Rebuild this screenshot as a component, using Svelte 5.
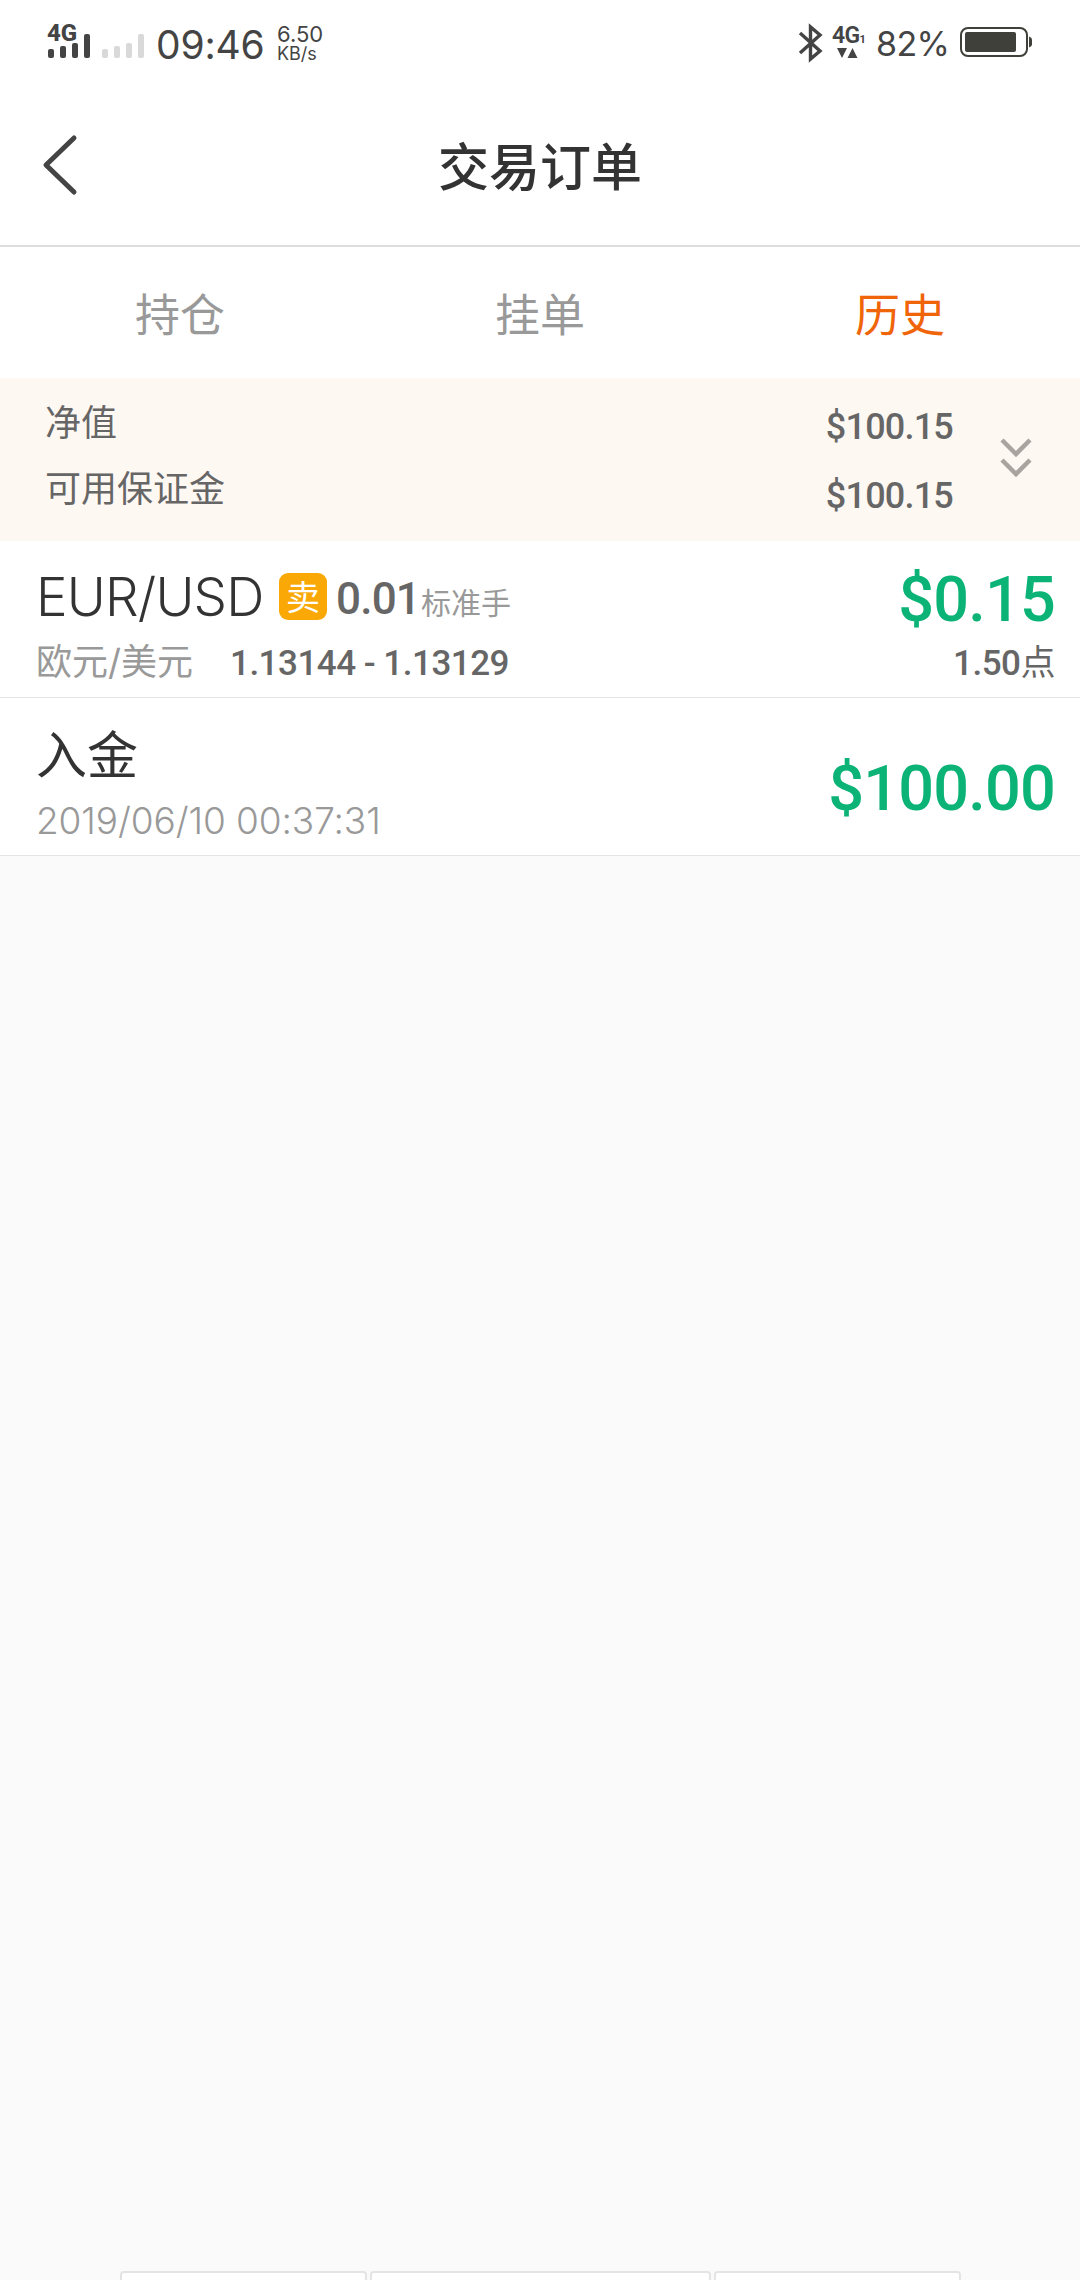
<script lang="ts">
	const tabs = ["持仓", "挂单", "历史"];
	let active = $state("历史");

	const account = [
		{ label: "净值", value: "$100.15" },
		{ label: "可用保证金", value: "$100.15" },
	];

	// signal bar heights, left to right
	const bars = [9, 12, 15, 24];
</script>

<div class="page">
	<div class="status">
		<svg class="signal" width="96" height="40" viewBox="0 0 96 40">
			<text x="-1" y="18.5" class="net">4G</text>
			{#each bars as h, i}
				<rect x={i * 12} y={36 - h} width="6" height={h} rx="2" fill="#444" />
				<rect x={54 + i * 12} y={36 - h} width="6" height={h} rx="2" fill="#d9d9d9" />
			{/each}
		</svg>
		<span class="time">09:46</span>
		<div class="speed">
			<span class="rate">6.50</span>
			<span class="unit">KB/s</span>
		</div>
		<div class="spacer"></div>
		<svg class="bluetooth" width="24" height="36" viewBox="0 0 24 36">
			<path d="M1 8 L21 26 L11.5 34 V2 L21 10 L1 28" fill="none" stroke="#444" stroke-width="3.400" />
		</svg>
		<svg class="data" width="36" height="36" viewBox="0 0 36 36">
			<text x="0" y="18" class="net thin">4G</text>
			<text x="27.500" y="18" class="sim">1</text>
			<path d="M5 23 h10 l-5 10z M15.500 33 h10 l-5 -10z" fill="#444" />
		</svg>
		<span class="percent">82%</span>
		<svg class="battery" width="73" height="30" viewBox="0 0 73 30">
			<rect x="1" y="1" width="66" height="28" rx="7" fill="none" stroke="#40403a" stroke-width="2" />
			<rect x="5" y="5" width="51" height="20" rx="2" fill="#40403a" />
			<path d="M69 9.500 q3 1 3 3 v5 q0 2 -3 3z" fill="#40403a" />
		</svg>
	</div>

	<header>
		<button class="back" aria-label="返回">
			<svg width="36" height="62" viewBox="0 0 36 62">
				<path d="M32 4 L4 31 L32 58" fill="none" stroke="#444" stroke-width="5" stroke-linecap="round" stroke-linejoin="round" />
			</svg>
		</button>
		<h1>交易订单</h1>
	</header>

	<nav>
		{#each tabs as tab}
			<button class:active={tab === active} onclick={() => (active = tab)}>{tab}</button>
		{/each}
	</nav>

	<section class="account">
		<div class="labels">
			{#each account as row}
				<span>{row.label}</span>
			{/each}
		</div>
		<div class="values">
			{#each account as row}
				<span>{row.value}</span>
			{/each}
		</div>
		<svg width="34" height="42" viewBox="0 0 34 42">
			<path d="M3 3 L17 17 L31 3 M3 23 L17 37 L31 23" fill="none" stroke="#aaa4a1" stroke-width="4.500" />
		</svg>
	</section>

	<section class="item trade">
		<div class="left">
			<div class="top">
				<span class="symbol">EUR/USD</span>
				<span class="badge">卖</span>
				<span class="lots">0.01</span>
				<span class="lots-unit">标准手</span>
			</div>
			<div class="bottom">
				<span class="name">欧元/美元</span>
				<span class="prices">1.13144 - 1.13129</span>
			</div>
		</div>
		<div class="right">
			<span class="profit">$0.15</span>
			<span class="points">1.50<i>点</i></span>
		</div>
	</section>

	<section class="item deposit">
		<div class="left">
			<span class="kind">入金</span>
			<span class="date">2019/06/10 00:37:31</span>
		</div>
		<div class="right">
			<span class="profit">$100.00</span>
		</div>
	</section>

	<div class="filters">
		<span></span>
		<span class="wide"></span>
		<span></span>
	</div>
</div>

<style>
	:global(body) {
		background: #fafafa;
	}

	.page {
		display: flex;
		flex-direction: column;
		width: 1080px;
		height: 2280px;
		overflow: hidden;
		background: #fafafa;
		color: #333;
		font-family: Inter, "Noto Sans CJK SC", sans-serif;
	}

	button {
		padding: 0;
		border: 0;
		background: none;
		font: inherit;
	}

	svg {
		display: block;
		flex: none;
		overflow: visible;
	}

	.status {
		display: flex;
		align-items: flex-start;
		box-sizing: border-box;
		height: 88px;
		padding: 22px 47px 0 48px;
		background: #fff;
		color: #444;
		white-space: nowrap;
	}

	.net {
		font: 800 24px Roboto, sans-serif;
		fill: #444;
	}

	.thin {
		font-weight: 600;
		font-size: 23px;
		letter-spacing: -0.6px;
	}

	.sim {
		font: 700 11px Roboto, sans-serif;
		fill: #444;
	}

	.time {
		width: 121px;
		margin-left: 12px;
		font-size: 39px;
		line-height: 46px;
		letter-spacing: -0.2px;
	}

	.speed {
		display: flex;
		flex-direction: column;
		padding-top: 2px;
	}

	.rate {
		font-size: 22px;
		line-height: 20px;
	}

	.unit {
		font-size: 18px;
		line-height: 20px;
	}

	.spacer {
		flex: 1;
	}

	.bluetooth {
		margin: 3px 9px 0 0;
	}

	.data {
		margin: 3px 8px 0 0;
	}

	.percent {
		width: 84px;
		font-size: 34px;
		line-height: 44px;
		letter-spacing: -0.6px;
	}

	.battery {
		margin-top: 5px;
	}

	header {
		display: grid;
		grid-template-columns: 120px 1fr 120px;
		align-items: center;
		box-sizing: border-box;
		height: 159px;
		border-bottom: 2px solid #ddd;
		background: #fff;
	}

	.back {
		padding-left: 42px;
		margin-top: -3px;
	}

	h1 {
		margin: 2px 0 0;
		font-size: 51px;
		line-height: 74px;
		font-weight: 500;
		text-align: center;
	}

	nav {
		display: grid;
		grid-template-columns: repeat(3, 1fr);
		height: 131px;
		background: #fff;
	}

	nav button {
		font-size: 45px;
		color: #999;
	}

	nav .active {
		color: #f0640a;
	}

	.account {
		display: flex;
		box-sizing: border-box;
		height: 163px;
		padding: 12px 47px 0 45px;
		background: #fef8f3;
		color: #666;
	}

	.labels,
	.values {
		display: flex;
		flex-direction: column;
	}

	.labels {
		flex: 1;
		font-size: 36px;
		line-height: 66px;
	}

	.values {
		padding-top: 3px;
		font: 500 36px / 69px Roboto, sans-serif;
		letter-spacing: -0.8px;
		text-align: right;
	}

	.account svg {
		margin: 47px 0 0 46px;
	}

	.item {
		display: flex;
		justify-content: space-between;
		box-sizing: border-box;
		height: 158px;
		padding: 0 25px 0 36px;
		border-bottom: 1px solid #e4e4e4;
		background: #fff;
		white-space: nowrap;
	}

	.trade {
		height: 157px;
	}

	.left,
	.right {
		display: flex;
		flex-direction: column;
	}

	.right {
		align-items: flex-end;
	}

	.top {
		display: flex;
		height: 85px;
		padding-top: 23px;
		box-sizing: border-box;
	}

	.symbol {
		width: 243px;
		font-size: 53px;
		font-weight: 300;
		line-height: 67px;
		letter-spacing: -0.8px;
	}

	.badge {
		width: 48px;
		height: 47px;
		margin-top: 9px;
		border-radius: 9px;
		background: #faa805;
		color: #fff;
		font-size: 34px;
		line-height: 49px;
		text-align: center;
	}

	.lots {
		width: 85px;
		margin-left: 9px;
		color: #666;
		font: 500 44px / 70px Roboto, sans-serif;
		letter-spacing: -0.8px;
	}

	.lots-unit {
		color: #999;
		font-size: 30px;
		line-height: 79px;
	}

	.bottom {
		display: flex;
		line-height: 52px;
		padding-top: 10px;
	}

	.name {
		width: 194px;
		color: #999;
		font-size: 36px;
	}

	.prices,
	.points {
		color: #666;
		font: 500 35px / 52px Roboto, sans-serif;
		letter-spacing: -0.5px;
	}

	.prices {
		padding-top: 2px;
	}

	.profit {
		color: #0bb377;
		font: 500 63px / 74px Roboto, sans-serif;
		letter-spacing: -0.8px;
	}

	.trade .profit {
		padding-top: 22px;
	}

	.points {
		margin-top: -3px;
	}

	.points i {
		font: 400 35px / 52px "Noto Sans CJK SC", sans-serif;
	}

	.kind {
		padding-top: 21px;
		font-size: 51px;
		line-height: 74px;
	}

	.date {
		color: #999;
		font-size: 37px;
		font-weight: 300;
		line-height: 56px;
		letter-spacing: -0.1px;
	}

	.deposit .profit {
		padding-top: 54px;
	}

	.filters {
		display: flex;
		gap: 3px;
		height: 9px;
		margin-top: auto;
		padding: 0 120px;
		overflow: hidden;
	}

	.filters span {
		flex: none;
		box-sizing: border-box;
		width: 247px;
		height: 60px;
		border: 2px solid #e4e4e4;
		border-radius: 4px;
		background: #fff;
	}

	.filters .wide {
		width: 341px;
	}
</style>
